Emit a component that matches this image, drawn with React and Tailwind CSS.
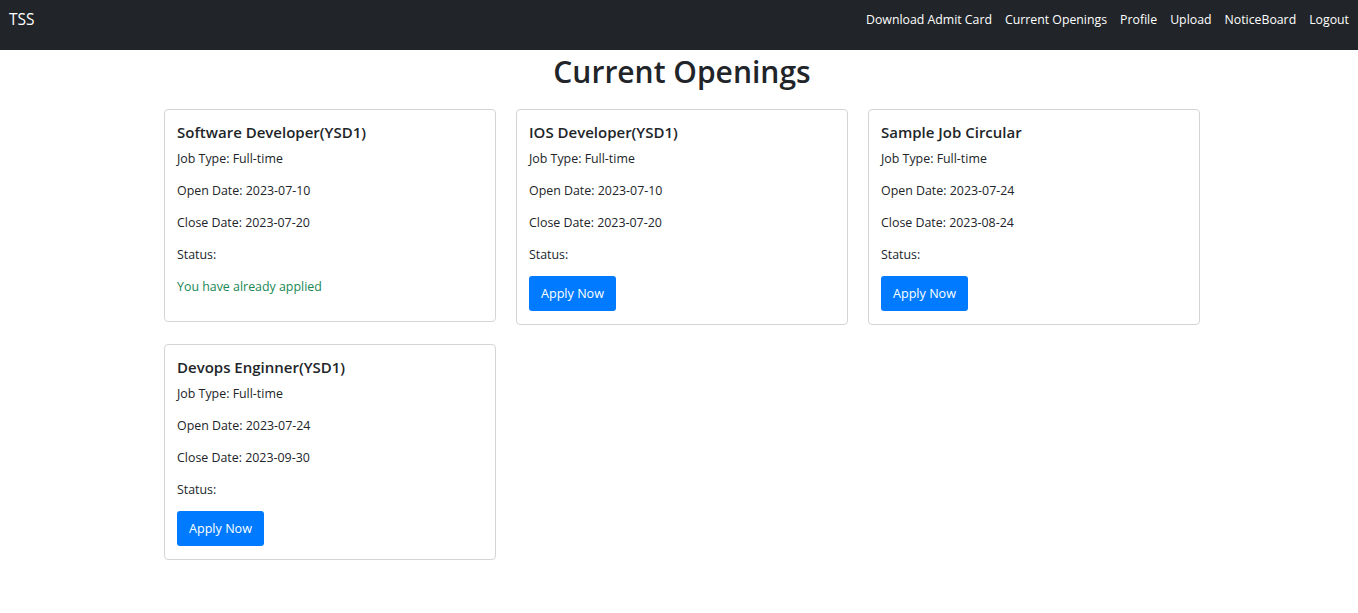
import React from 'react';

const jobs = [
    { title: 'Software Developer(YSD1)', type: 'Full-time', open: '2023-07-10', close: '2023-07-20', applied: true },
    { title: 'IOS Developer(YSD1)', type: 'Full-time', open: '2023-07-10', close: '2023-07-20', applied: false },
    { title: 'Sample Job Circular', type: 'Full-time', open: '2023-07-24', close: '2023-08-24', applied: false },
    { title: 'Devops Enginner(YSD1)', type: 'Full-time', open: '2023-07-24', close: '2023-09-30', applied: false },
];

const links = ['Download Admit Card', 'Current Openings', 'Profile', 'Upload', 'NoticeBoard', 'Logout'];

function JobCard({ job }) {
    return (
        <div className="border border-[#d5d5d5] rounded-[4px] bg-white px-[12px] pt-[12px] pb-[13px]">
            <h5 className="text-[15px] leading-[20px] font-semibold text-[#212529] mb-[7px]">{job.title}</h5>
            <p className="text-[12.4px] leading-[20px] mb-[12px]">Job Type: {job.type}</p>
            <p className="text-[12.4px] leading-[20px] mb-[12px]">Open Date: {job.open}</p>
            <p className="text-[12.4px] leading-[20px] mb-[12px]">Close Date: {job.close}</p>
            <p className="text-[12.4px] leading-[20px] mb-[11px]">Status:</p>
            {job.applied ? (
                <p className="text-[12.4px] leading-[20px] pt-[1px] mb-[11px] text-[#198754]">You have already applied</p>
            ) : (
                <button className="h-[35px] px-[12px] pt-[2px] bg-[#007bff] text-white text-[12.6px] rounded-[3px]">
                    Apply Now
                </button>
            )}
        </div>
    );
}

export default function App() {
    return (
        <div className="min-h-[613px] bg-white text-[#212529]" style={{ fontFamily: '"Open Sans", sans-serif' }}>
            <nav className="h-[50px] bg-[#212529] flex items-start justify-between px-[9px] pt-[8px]">
                <span className="text-white text-[15.5px] leading-[22px]">TSS</span>
                <div className="flex gap-[13px] pt-[2px]">
                    {links.map((l) => (
                        <a key={l} className="text-white text-[12.3px] leading-[20px]">{l}</a>
                    ))}
                </div>
            </nav>

            <div className="w-[1042px] mx-auto pl-[6px]">
                <h1 className="text-center text-[30px] leading-[36px] font-semibold mt-[4px] mb-[19px]">Current Openings</h1>
                <div className="grid grid-cols-3 gap-x-[20px] gap-y-[19px] items-start">
                    {jobs.map((j) => (
                        <JobCard key={j.title} job={j} />
                    ))}
                </div>
            </div>
        </div>
    );
}
